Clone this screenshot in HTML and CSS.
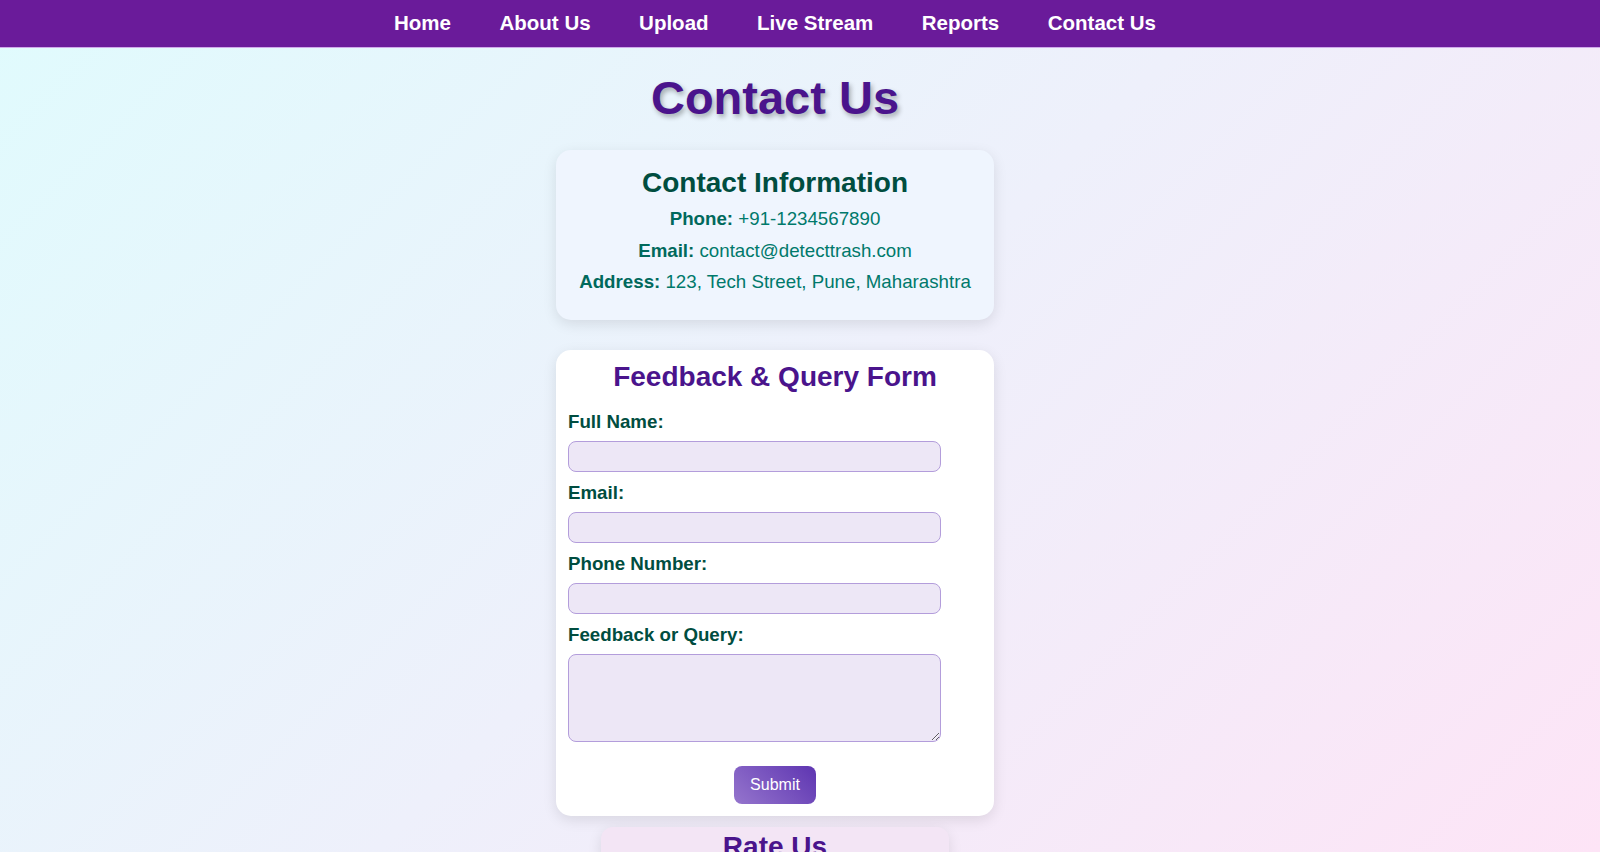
FILE: index.html
```html
<!DOCTYPE html>
<html lang="en">
<head>
<meta charset="utf-8">
<title>Contact Us</title>
<link rel="stylesheet" href="styles.css">
</head>
<body>
<nav class="topnav">
  <ul class="nav-list">
    <li><a href="#">Home</a></li>
    <li><a href="#">About Us</a></li>
    <li><a href="#">Upload</a></li>
    <li><a href="#">Live Stream</a></li>
    <li><a href="#">Reports</a></li>
    <li><a href="#">Contact Us</a></li>
  </ul>
</nav>
<main class="page">
  <h1 class="page-title">Contact Us</h1>

  <section class="card info-card">
    <h2 class="info-title">Contact Information</h2>
    <p class="info-line"><strong>Phone:</strong> +91-1234567890</p>
    <p class="info-line"><strong>Email:</strong> contact@detecttrash.com</p>
    <p class="info-line"><strong>Address:</strong> 123, Tech Street, Pune, Maharashtra</p>
  </section>

  <section class="card form-card">
    <h2 class="form-title">Feedback &amp; Query Form</h2>
    <form class="feedback-form">
      <label class="field-label" for="name">Full Name:</label>
      <input class="field-input" id="name" type="text">
      <label class="field-label" for="email">Email:</label>
      <input class="field-input" id="email" type="email">
      <label class="field-label" for="phone">Phone Number:</label>
      <input class="field-input" id="phone" type="tel">
      <label class="field-label" for="msg">Feedback or Query:</label>
      <textarea class="field-area" id="msg"></textarea>
      <div class="submit-row">
        <button class="submit-btn" type="button">Submit</button>
      </div>
    </form>
  </section>

  <section class="rate-card">
    <h2 class="rate-title">Rate Us</h2>
  </section>
</main>
</body>
</html>
```

FILE: styles.css
```css
html, body {
  margin: 0;
  padding: 0;
}

body {
  font-family: "Liberation Sans", Arial, sans-serif;
  background: linear-gradient(135deg, #e0fbfd 0%, #eef0fb 50%, #fde4f6 100%);
  min-height: 100vh;
  height: 852px;
  overflow: hidden;
}

.topnav {
  background: #6a1b9a;
  height: 47px;
  border-bottom: 1px solid #cfa9ea;
  padding-right: 50px;
}

.nav-list {
  list-style: none;
  margin: 0;
  padding: 0;
  height: 45px;
  display: flex;
  justify-content: center;
  align-items: center;
  gap: 48.5px;
}

.nav-list a {
  color: #ffffff;
  text-decoration: none;
  font-weight: bold;
  font-size: 20.5px;
  line-height: 24px;
}

.page {
  padding-right: 50px;
  display: flex;
  flex-direction: column;
  align-items: center;
}

.page-title {
  margin: 22px 0 25px;
  font-size: 47px;
  line-height: 55px;
  color: #4a148c;
  text-shadow: 2px 3px 5px rgba(0, 0, 0, 0.3);
}

.card {
  width: 438px;
  box-sizing: border-box;
  border-radius: 15px;
  box-shadow: 0 4px 14px rgba(0, 0, 0, 0.1);
}

.info-card {
  background: #eff5fe;
  padding: 17px 12px 22px;
  text-align: center;
}

.info-title {
  margin: 0 0 4px;
  font-size: 28px;
  line-height: 32px;
  color: #004d40;
}

.info-line {
  margin: 0;
  font-size: 18.72px;
  line-height: 31.5px;
  color: #00796b;
}

.info-line strong {
  color: #00695c;
}

.form-card {
  margin-top: 30px;
  background: #ffffff;
  padding: 11px 12px 12px;
}

.form-title {
  margin: 0 0 18px;
  text-align: center;
  font-size: 28px;
  line-height: 32px;
  color: #4a148c;
}

.feedback-form {
  display: flex;
  flex-direction: column;
  align-items: flex-start;
}

.field-label {
  display: block;
  font-weight: bold;
  font-size: 18.72px;
  line-height: 22px;
  color: #004d40;
  margin-bottom: 8px;
}

.field-input,
.field-area {
  box-sizing: border-box;
  width: 373px;
  background: #ede7f6;
  border: 1px solid #b39ddb;
  border-radius: 8px;
  margin: 0 0 10px;
  font-family: inherit;
  font-size: 16px;
}

.field-input {
  height: 31px;
}

.field-area {
  height: 88px;
  margin-bottom: 0;
}

.submit-row {
  align-self: stretch;
  display: flex;
  justify-content: center;
  margin-top: 24px;
}

.submit-btn {
  font-family: inherit;
  font-size: 16px;
  line-height: 18px;
  color: #ffffff;
  padding: 10px 16px;
  border: none;
  border-radius: 8px;
  background: linear-gradient(45deg, #9575cd, #5e35b1);
}

.rate-card {
  margin-top: 11px;
  width: 348px;
  box-sizing: border-box;
  background: #f3e5f5;
  border-radius: 12px;
  box-shadow: 0 4px 14px rgba(0, 0, 0, 0.1);
  padding: 4px 12px 16px;
  text-align: center;
}

.rate-title {
  margin: 0;
  font-size: 28px;
  line-height: 32px;
  color: #4a148c;
}
```
